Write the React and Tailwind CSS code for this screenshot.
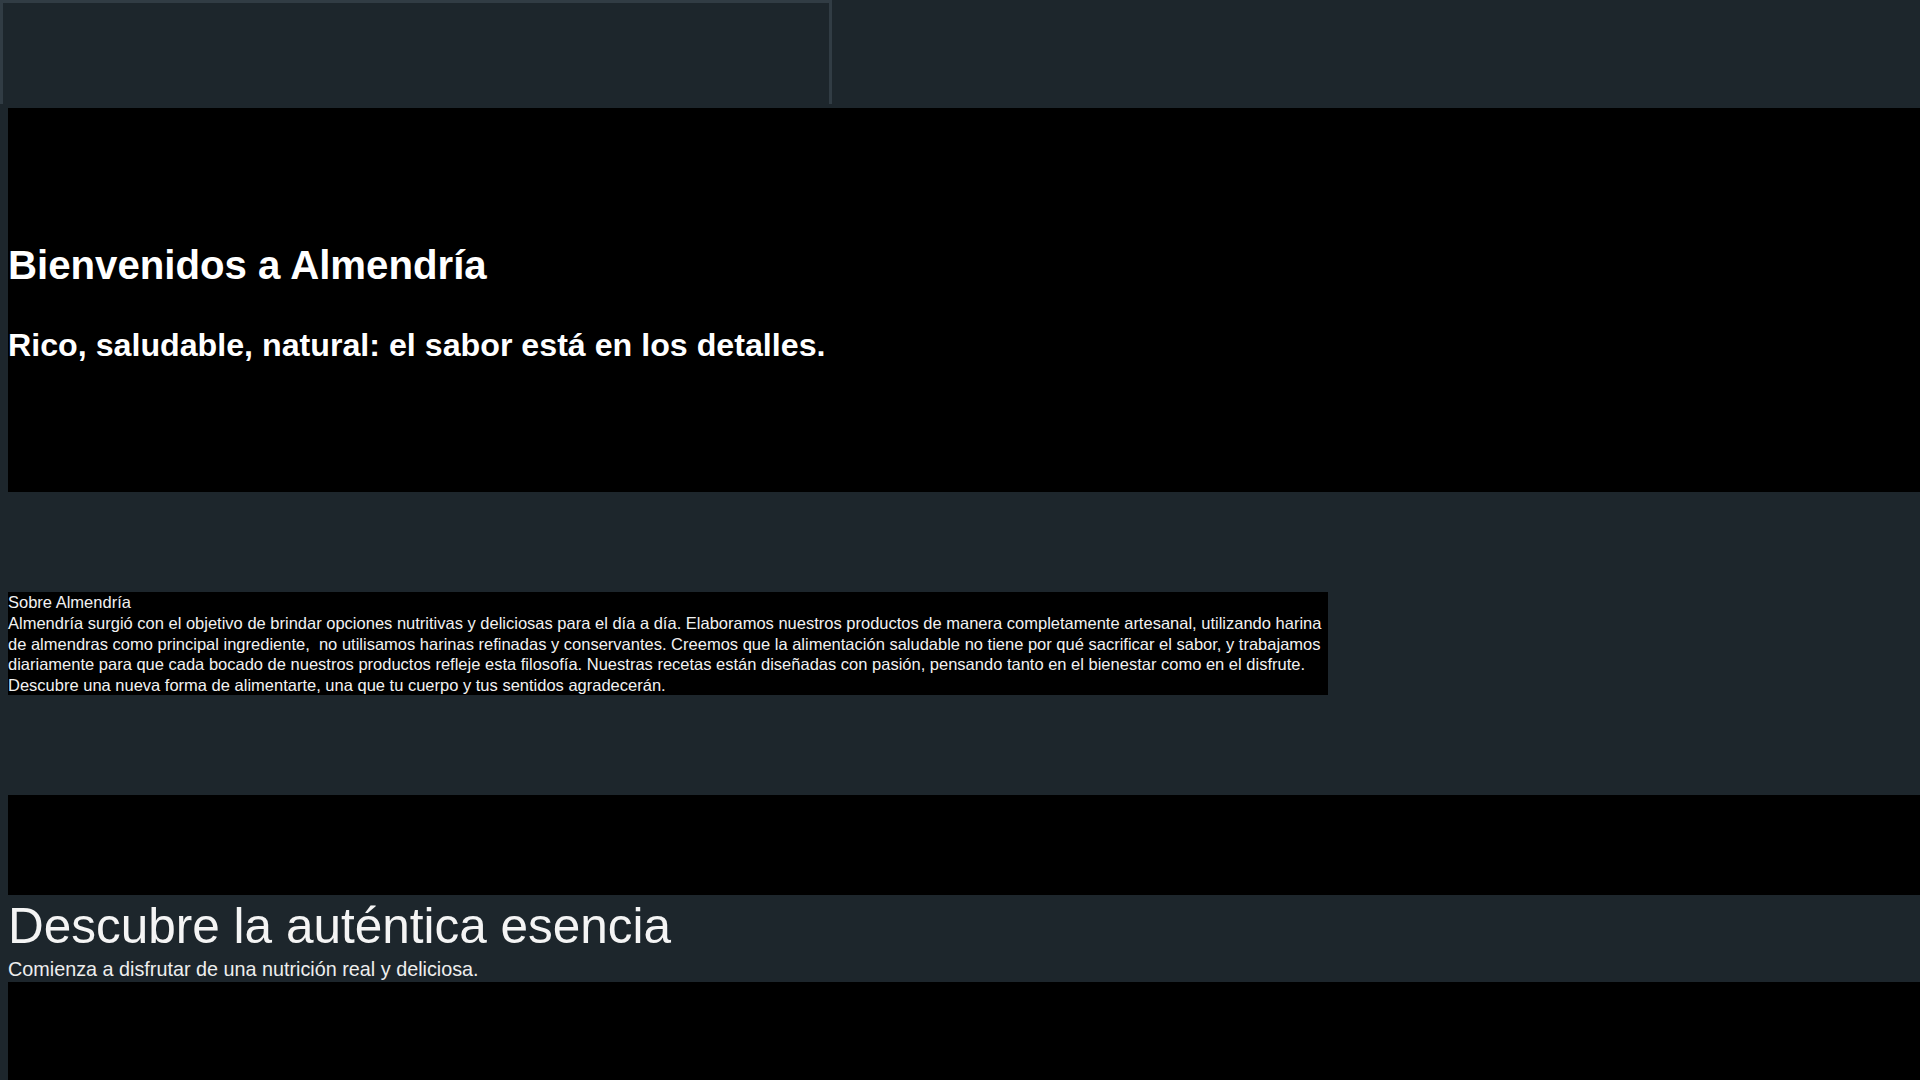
export default function App() {
  return (
    <div className="h-screen w-screen overflow-scroll bg-[#1d262c] [&::-webkit-scrollbar]:h-[15px] [&::-webkit-scrollbar]:w-[15px] [&::-webkit-scrollbar]:bg-[#f1f1f1] [&::-webkit-scrollbar-thumb]:border-[2px] [&::-webkit-scrollbar-thumb]:border-solid [&::-webkit-scrollbar-thumb]:border-[#f1f1f1] [&::-webkit-scrollbar-thumb]:bg-[#c1c1c1] [&::-webkit-scrollbar-corner]:bg-[#dcdcdc]">
      <div className="w-[1928px] bg-[#1d262c] font-['Liberation_Sans',Arial,sans-serif] text-white">
        {/* top frame */}
        <div className="h-[104px] w-[832px] border-[3px] border-b-0 border-[#313c44] bg-[#1d262c]" />

        <div className="pl-2 pt-1">
          {/* hero */}
          <section className="h-[384px] w-[1920px] bg-black pt-[135px]">
            <h1 className="text-[40.2px] font-bold leading-[46px]">Bienvenidos a Almendría</h1>
            <h2 className="mt-[38px] text-[32.2px] font-bold leading-[37px]">
              Rico, saludable, natural: el sabor está en los detalles.
            </h2>
          </section>

          {/* about */}
          <div className="mt-[100px] h-[103px] w-[1320px] bg-black text-[16.5px] leading-[20.8px] text-[#f2f2f2]">
            <div className="whitespace-nowrap">Sobre Almendría</div>
            <div className="whitespace-nowrap">
              Almendría surgió con el objetivo de brindar opciones nutritivas y deliciosas para el día a día. Elaboramos nuestros productos de manera completamente artesanal, utilizando harina
            </div>
            <div className="whitespace-nowrap">
              de almendras como principal ingrediente,{'\u00a0'} no utilisamos harinas refinadas y conservantes. Creemos que la alimentación saludable no tiene por qué sacrificar el sabor, y trabajamos
            </div>
            <div className="whitespace-nowrap">
              diariamente para que cada bocado de nuestros productos refleje esta filosofía. Nuestras recetas están diseñadas con pasión, pensando tanto en el bienestar como en el disfrute.
            </div>
            <div className="whitespace-nowrap">
              Descubre una nueva forma de alimentarte, una que tu cuerpo y tus sentidos agradecerán.
            </div>
          </div>

          <div className="mt-[100px] h-[100px] w-[1920px] bg-black" />

          {/* call to action */}
          <section className="flex h-[87px] w-[1920px] flex-col">
            <h2 className="text-[49.5px] leading-[62px] text-[#f4f4f4]">Descubre la auténtica esencia</h2>
            <p className="text-[19.8px] leading-[25px] text-[#eeeeee]">
              Comienza a disfrutar de una nutrición real y deliciosa.
            </p>
          </section>

          <div className="h-[3590px] w-[1920px] bg-black" />
        </div>
      </div>
    </div>
  )
}
